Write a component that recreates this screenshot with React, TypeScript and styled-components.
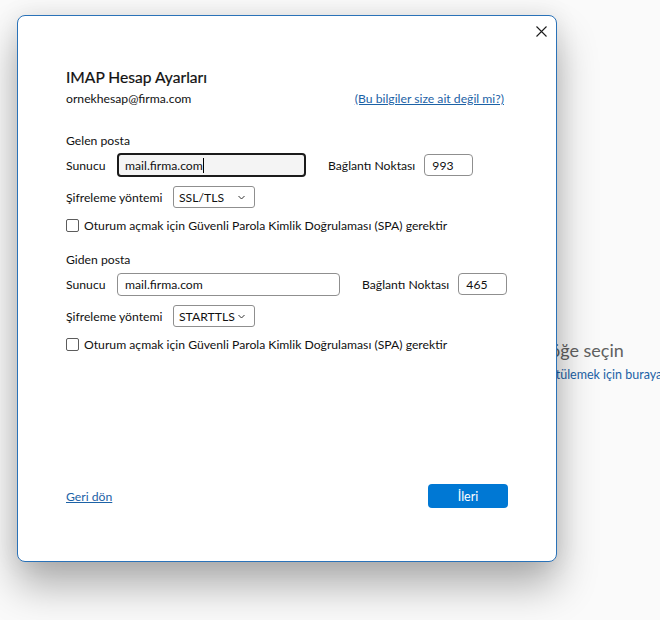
import React from "react";
import styled, { createGlobalStyle } from "styled-components";

const GlobalStyle = createGlobalStyle`
  html, body {
    margin: 0;
    padding: 0;
  }
  body {
    background: #fafafa;
    font-family: "Lato", "Liberation Sans", sans-serif;
    color: #111;
  }
`;

const Screen = styled.div`
  position: relative;
  width: 660px;
  height: 620px;
  overflow: hidden;
  background: #fafafa;
`;

// reading pane of the mail window, mostly hidden behind the dialog
const ReadingPane = styled.div`
  display: flex;
  flex-direction: column;
  gap: 5px;
  padding-top: 338px;
`;

const PaneTitle = styled.div<{ indent: number }>`
  padding-left: ${(p) => p.indent}px;
  font-size: 18px;
  line-height: 24px;
  color: #616161;
  white-space: nowrap;
`;

const PaneLink = styled.div<{ indent: number }>`
  padding-left: ${(p) => p.indent}px;
  font-size: 12.5px;
  line-height: 16px;
  color: #1c62a6;
  white-space: nowrap;
`;

const Dialog = styled.div`
  position: absolute;
  left: 17px;
  top: 15px;
  width: 540px;
  height: 547px;
  box-sizing: border-box;
  border: 1px solid #2a72b8;
  border-radius: 8px;
  background: #fff;
  box-shadow: 0 24px 40px rgba(0, 0, 0, 0.3), 0 0 24px rgba(0, 0, 0, 0.09);
  display: flex;
  flex-direction: column;
  padding: 51px 48px 53px;
  font-size: 12.2px;
`;

const CloseButton = styled.button`
  position: absolute;
  top: 4px;
  right: 4px;
  width: 22px;
  height: 22px;
  padding: 0;
  border: none;
  background: none;
  display: flex;
  align-items: center;
  justify-content: center;
  cursor: pointer;
`;

const Title = styled.div`
  font-size: 15.6px;
  line-height: 20px;
  color: #111;
  -webkit-text-stroke: 0.2px #111;
`;

const AccountRow = styled.div`
  display: flex;
  justify-content: space-between;
  align-items: center;
  height: 18px;
  margin-top: 2px;
`;

const TextLink = styled.a`
  color: #1c62a6;
  text-decoration: underline;
  cursor: pointer;
`;

const NotYouLink = styled(TextLink)`
  padding-right: 4px;
`;

const SectionLabel = styled.div<{ mt: number }>`
  margin-top: ${(p) => p.mt}px;
  line-height: 18px;
`;

const FieldRow = styled.div<{ mt: number; h: number }>`
  display: flex;
  align-items: center;
  height: ${(p) => p.h}px;
  margin-top: ${(p) => p.mt}px;
`;

const FieldLabel = styled.span<{ w: number }>`
  width: ${(p) => p.w}px;
  flex-shrink: 0;
  white-space: nowrap;
`;

const PortLabel = styled.span`
  margin-left: 22px;
  margin-right: 9px;
  white-space: nowrap;
`;

const TextBox = styled.div<{ w: number; h: number; focused?: boolean }>`
  box-sizing: border-box;
  width: ${(p) => p.w}px;
  height: ${(p) => p.h}px;
  border: ${(p) => (p.focused ? "2px solid #1b1b1b" : "1px solid #8f8f8f")};
  border-radius: 4px;
  background: ${(p) => (p.focused ? "#f4f4f4" : "#fff")};
  padding-left: ${(p) => (p.focused ? 6 : 7)}px;
  display: flex;
  align-items: center;
`;

const Caret = styled.span`
  width: 1px;
  height: 15px;
  background: #000;
`;

const Select = styled.div`
  box-sizing: border-box;
  width: 82px;
  height: 22px;
  border: 1px solid #8f8f8f;
  border-radius: 3px;
  padding: 0 9px 0 5px;
  display: flex;
  align-items: center;
  justify-content: space-between;
`;

const CheckRow = styled.label<{ mt: number }>`
  display: flex;
  align-items: center;
  gap: 5px;
  height: 18px;
  margin-top: ${(p) => p.mt}px;
  white-space: nowrap;
`;

const CheckBox = styled.span`
  box-sizing: border-box;
  width: 13px;
  height: 13px;
  border: 1px solid #5c5c5c;
  border-radius: 2px;
  background: #fff;
`;

const Footer = styled.div`
  margin-top: auto;
  display: flex;
  justify-content: space-between;
  align-items: center;
  height: 24px;
`;

const PrimaryButton = styled.button`
  width: 80px;
  height: 24px;
  border: none;
  border-radius: 4px;
  background: #0078d4;
  color: #fff;
  font-family: inherit;
  font-size: 12.5px;
  cursor: pointer;
`;

const Chevron = () => (
  <svg width="7" height="5" viewBox="0 0 7 5">
    <polyline points="0.5,1 3.5,4 6.5,1" fill="none" stroke="#333" strokeWidth="1" />
  </svg>
);

const CloseIcon = () => (
  <svg width="11" height="11" viewBox="0 0 11 11">
    <path d="M0.5 0.5 L10.5 10.5 M10.5 0.5 L0.5 10.5" stroke="#1b1b1b" strokeWidth="1.1" />
  </svg>
);

type ServerProps = {
  heading: string;
  headingTop: number;
  boxWidth: number;
  boxHeight: number;
  port: string;
  security: string;
  focused?: boolean;
};

const ServerSection = ({ heading, headingTop, boxWidth, boxHeight, port, security, focused }: ServerProps) => (
  <>
    <SectionLabel mt={headingTop}>{heading}</SectionLabel>
    <FieldRow mt={3} h={24}>
      <FieldLabel w={51}>Sunucu</FieldLabel>
      <TextBox w={boxWidth} h={boxHeight} focused={focused}>
        mail.firma.com
        {focused && <Caret />}
      </TextBox>
      <PortLabel>Bağlantı Noktası</PortLabel>
      <TextBox w={49} h={22}>
        {port}
      </TextBox>
    </FieldRow>
    <FieldRow mt={9} h={22}>
      <FieldLabel w={107}>Şifreleme yöntemi</FieldLabel>
      <Select>
        {security}
        <Chevron />
      </Select>
    </FieldRow>
    <CheckRow mt={8}>
      <CheckBox />
      Oturum açmak için Güvenli Parola Kimlik Doğrulaması (SPA) gerektir
    </CheckRow>
  </>
);

export default function App() {
  return (
    <Screen>
      <GlobalStyle />
      <ReadingPane>
        <PaneTitle indent={422}>Okumak için bir öğe seçin</PaneTitle>
        <PaneLink indent={392}>Her zaman bir önizleme görüntülemek için buraya tıklayın</PaneLink>
      </ReadingPane>

      <Dialog>
        <CloseButton aria-label="Kapat">
          <CloseIcon />
        </CloseButton>
        <Title>IMAP Hesap Ayarları</Title>
        <AccountRow>
          <span>ornekhesap@firma.com</span>
          <NotYouLink>(Bu bilgiler size ait değil mi?)</NotYouLink>
        </AccountRow>

        <ServerSection
          heading="Gelen posta"
          headingTop={25}
          boxWidth={189}
          boxHeight={24}
          port="993"
          security="SSL/TLS"
          focused
        />
        <ServerSection
          heading="Giden posta"
          headingTop={17}
          boxWidth={223}
          boxHeight={23}
          port="465"
          security="STARTTLS"
        />

        <Footer>
          <TextLink>Geri dön</TextLink>
          <PrimaryButton>İleri</PrimaryButton>
        </Footer>
      </Dialog>
    </Screen>
  );
}
